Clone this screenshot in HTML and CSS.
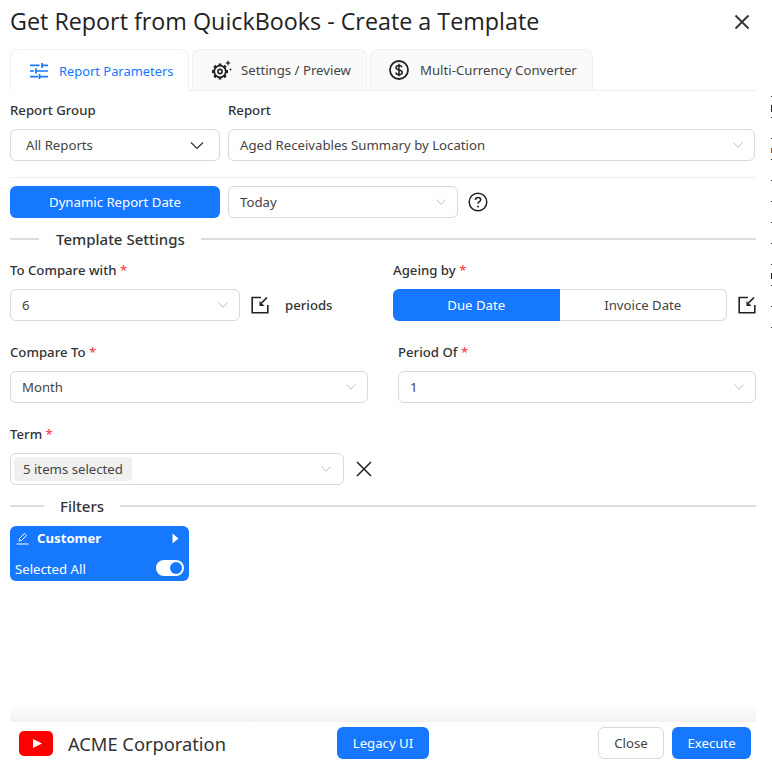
FILE: index.html
```html
<!DOCTYPE html>
<html lang="en">
<head>
    <meta charset="UTF-8">
    <meta name="viewport" content="width=device-width, initial-scale=1.0">
    <title>Get Report from QuickBooks - Create a Template</title>
    <link rel="stylesheet" href="styles.css">
</head>
<body>
<div class="dialog">
    <div class="dialog-head">
        <h1>Get Report from QuickBooks - Create a Template</h1>
        <svg class="close-x" width="16" height="16" viewBox="0 0 16 16"><path d="M1.500 1.500l13 13M14.500 1.500l-13 13" stroke="#333" stroke-width="1.800" fill="none"/></svg>
    </div>

    <div class="tabs">
        <div class="tab active">
            <svg width="18" height="16" viewBox="0 0 18 16" fill="none" stroke="#1677ff" stroke-width="1.700"><path d="M0 2.300h9.500M12 0v5M12 2.300h6M0 8h4M6 5.200v5.600M6 8h12M0 13.700h8M9.500 11v5M9.500 13.700h8.500"/></svg>
            <span>Report Parameters</span>
        </div>
        <div class="tab tab-settings">
            <svg width="22" height="22" viewBox="0 0 22 22" fill="none" stroke="#222"><circle cx="9" cy="12.500" r="2.100" stroke-width="1.600"/><circle cx="9" cy="12.500" r="5.800" stroke-width="1.800"/><path d="M9 4.500v2.200M9 18.300v2.200M1 12.500h2.200M14.800 12.500H17M3.300 6.800l1.600 1.600M13.100 16.600l1.600 1.600M14.700 6.800l-1.600 1.600M4.900 16.600l-1.600 1.600" stroke-width="2.800"/><path d="M17 1l.8 2.200 2.200.8-2.200.8-.8 2.200-.8-2.200-2.200-.8 2.200-.8z" fill="#222" stroke="none"/><path d="M19.500 9l.4 1.100 1.100.4-1.100.4-.4 1.100-.4-1.100-1.100-.4 1.100-.4z" fill="#222" stroke="none"/></svg>
            <span>Settings / Preview</span>
        </div>
        <div class="tab tab-currency">
            <svg width="20" height="20" viewBox="0 0 20 20" fill="none" stroke="#222"><circle cx="10" cy="10" r="9" stroke-width="1.800"/><path d="M13 7.200c-.4-1.200-1.500-1.800-3-1.800-1.700 0-3 .9-3 2.300 0 3 6.200 1.500 6.200 4.500 0 1.400-1.400 2.400-3.200 2.400-1.700 0-2.900-.8-3.200-2.100M10 3.800v12.400" stroke-width="1.500"/></svg>
            <span>Multi-Currency Converter</span>
        </div>
    </div>

    <div class="row-top">
        <div class="field">
            <label>Report Group</label>
            <div class="select">
                <span>All Reports</span>
                <svg class="chev-dark" width="14" height="9" viewBox="0 0 14 9"><path d="M1 1.500l6 6 6-6" fill="none" stroke="#333" stroke-width="1.200"/></svg>
            </div>
        </div>
        <div class="field">
            <label>Report</label>
            <div class="select">
                <span>Aged Receivables Summary by Location</span>
                <svg class="chev" width="10" height="6" viewBox="0 0 10 6"><path d="M.5.500L5 5.200 9.500.5"/></svg>
            </div>
        </div>
    </div>

    <hr class="thin">

    <div class="row-date">
        <button class="btn primary date-btn">Dynamic Report Date</button>
        <div class="select date-select">
            <span>Today</span>
            <svg class="chev" width="10" height="6" viewBox="0 0 10 6"><path d="M.5.500L5 5.200 9.500.5"/></svg>
        </div>
        <svg width="20" height="20" viewBox="0 0 20 20" fill="none" stroke="#222"><circle cx="10" cy="10" r="8.800" stroke-width="1.500"/><path d="M7.400 8c0-1.600 1.100-2.600 2.700-2.600 1.500 0 2.600 1 2.600 2.300 0 2-2.700 2-2.700 4.100" stroke-width="1.500"/><circle cx="10" cy="14.500" r="1" fill="#222" stroke="none"/></svg>
    </div>

    <div class="divider first"><span>Template Settings</span></div>

    <div class="row-compare">
        <div class="field compare-with">
            <label>To Compare with <em>*</em></label>
            <div class="inline">
                <div class="select compare-select">
                    <span>6</span>
                    <svg class="chev" width="10" height="6" viewBox="0 0 10 6"><path d="M.5.500L5 5.200 9.500.5"/></svg>
                </div>
                <svg class="pop" width="18" height="18" viewBox="0 0 18 18"><path d="M10 1.500H1.200v15.300h15.600V9" fill="none" stroke="#222" stroke-width="1.600"/><path d="M16 1.500l-5.500 5.500" stroke="#222" stroke-width="1.700"/><path d="M8.500 5v5h5z" fill="#222"/></svg>
                <strong class="periods">periods</strong>
            </div>
        </div>
        <div class="field ageing">
            <label>Ageing by <em>*</em></label>
            <div class="inline">
                <div class="segmented">
                    <div class="seg on">Due Date</div>
                    <div class="seg off">Invoice Date</div>
                </div>
                <svg class="pop" width="18" height="18" viewBox="0 0 18 18"><path d="M10 1.500H1.200v15.300h15.600V9" fill="none" stroke="#222" stroke-width="1.600"/><path d="M16 1.500l-5.500 5.500" stroke="#222" stroke-width="1.700"/><path d="M8.500 5v5h5z" fill="#222"/></svg>
            </div>
        </div>
    </div>

    <div class="row-period">
        <div class="field">
            <label>Compare To <em>*</em></label>
            <div class="select">
                <span>Month</span>
                <svg class="chev" width="10" height="6" viewBox="0 0 10 6"><path d="M.5.500L5 5.200 9.500.5"/></svg>
            </div>
        </div>
        <div class="field">
            <label>Period Of <em>*</em></label>
            <div class="select">
                <span>1</span>
                <svg class="chev" width="10" height="6" viewBox="0 0 10 6"><path d="M.5.500L5 5.200 9.500.5"/></svg>
            </div>
        </div>
    </div>

    <div class="field term">
        <label>Term <em>*</em></label>
        <div class="inline">
            <div class="select term-select">
                <span class="tag">5 items selected</span>
                <svg class="chev" width="10" height="6" viewBox="0 0 10 6"><path d="M.5.500L5 5.200 9.500.5"/></svg>
            </div>
            <svg class="clear-x" width="16" height="16" viewBox="0 0 16 16"><path d="M1 1l14 14M15 1L1 15" stroke="#222" stroke-width="1.500" fill="none"/></svg>
        </div>
    </div>

    <div class="divider filters"><span>Filters</span></div>

    <div class="filter-card">
        <div class="filter-top">
            <svg width="13" height="13" viewBox="0 0 13 13" fill="none" stroke="#fff" stroke-width="1"><path d="M3 9l.5-2.500L8.500 1.500l2 2-5 5zM.5 12h12"/></svg>
            <strong>Customer</strong>
            <svg class="caret" width="7" height="11" viewBox="0 0 7 11"><path d="M0.500 0.500l6 5-6 5z" fill="#fff"/></svg>
        </div>
        <div class="filter-bottom">
            <span>Selected All</span>
            <div class="switch"><i></i></div>
        </div>
    </div>
</div>

<div class="footer">
    <div class="brand">
        <svg width="34" height="25" viewBox="0 0 34 25"><rect width="34" height="25" rx="5" fill="#f00"/><path d="M14 8l9 4.500-9 4.500z" fill="#fff"/></svg>
        <span>ACME Corporation</span>
    </div>
    <button class="btn primary legacy">Legacy UI</button>
    <div class="actions">
        <button class="btn plain">Close</button>
        <button class="btn primary execute">Execute</button>
    </div>
</div>

<div class="edge-ticks">
    <i class="bar bar-one"></i>
    <i class="bar bar-two"></i>
    <i class="bar bar-three"></i>
</div>
</body>
</html>
```

FILE: styles.css
```css
* {
    box-sizing: border-box;
}
body {
    margin: 0;
    height: 764px;
    overflow: hidden;
    display: flex;
    flex-direction: column;
    background-color: #fff;
    color: #333;
    font-family: "Noto Sans", Arial, sans-serif;
    font-size: 13.2px;
    position: relative;
}
.dialog {
    flex: 1;
    padding: 0 16px 0 10px;
}
.dialog-head {
    height: 49px;
    display: flex;
    justify-content: space-between;
    align-items: flex-start;
    padding: 6px 6px 0 0;
}
h1 {
    margin: 0;
    font-family: "Open Sans", Arial, sans-serif;
    font-size: 23.3px;
    font-weight: 400;
    line-height: 31px;
    color: #222;
}
.close-x {
    margin-top: 8px;
}
.tabs {
    height: 42px;
    display: flex;
    gap: 3px;
    border-bottom: 1px solid #eee;
}
.tab {
    height: 41px;
    display: flex;
    align-items: center;
    padding-left: 18px;
    white-space: nowrap;
    background-color: #fafafa;
    border: 1px solid #f0f0f0;
    border-bottom: none;
    border-radius: 8px 8px 0 0;
    color: #444;
}
.tab.active {
    width: 179px;
    height: 42px;
    gap: 11px;
    padding-left: 19px;
    background-color: #fff;
    color: #1677ff;
    font-size: 12.9px;
}
.tab-settings {
    width: 175px;
    gap: 8px;
}
.tab-currency {
    width: 223px;
    gap: 11px;
}
label {
    display: block;
    height: 18px;
    line-height: 18px;
    margin-bottom: 10px;
    font-weight: 500;
    color: #333;
}
label em {
    font-style: normal;
    color: #ff3b3f;
}
.select {
    height: 32px;
    display: flex;
    align-items: center;
    justify-content: space-between;
    padding: 0 11px;
    border: 1px solid #d9d9d9;
    border-radius: 6px;
    background-color: #fff;
    color: #444;
}
.chev {
    fill: none;
    stroke: #bfbfbf;
    stroke-width: 1;
    flex: none;
}
.row-top {
    display: grid;
    grid-template-columns: 210px 527px;
    column-gap: 8px;
    padding-top: 10px;
}
.row-top .field:first-child .select {
    padding: 0 15px;
}
hr.thin {
    border: none;
    border-top: 1px solid #eee;
    margin: 16px 0 8px;
}
.row-date {
    display: flex;
    align-items: center;
    gap: 8px;
}
.btn {
    height: 32px;
    border: none;
    border-radius: 6px;
    font-family: inherit;
    font-size: 13.2px;
    padding: 0;
}
.primary {
    background-color: #1677ff;
    color: #fff;
}
.plain {
    width: 66px;
    background-color: #fff;
    border: 1px solid #d9d9d9;
    color: #444;
}
.legacy {
    width: 92px;
}
.execute {
    width: 79px;
}
.date-btn {
    width: 210px;
}
.date-select {
    width: 230px;
}
.row-date svg:last-child {
    margin-left: 2px;
}
.divider {
    display: flex;
    align-items: center;
    height: 20px;
    font-size: 15px;
    font-weight: 500;
    color: #333;
}
.divider::before {
    content: "";
    height: 2px;
    background-color: #ddd;
}
.divider::after {
    content: "";
    flex: 1;
    height: 2px;
    background-color: #ddd;
}
.divider.first {
    margin-top: 11px;
}
.divider.first::before {
    width: 29px;
}
.divider.first span {
    padding: 0 16px 0 17px;
}
.divider.filters {
    margin-top: 11px;
}
.divider.filters::before {
    width: 34px;
}
.divider.filters span {
    padding: 0 16px;
}
.row-compare {
    display: flex;
    margin-top: 12px;
}
.compare-with {
    width: 383px;
}
.ageing {
    flex: 1;
}
.inline {
    display: flex;
    align-items: center;
}
.compare-select {
    width: 230px;
}
.pop {
    flex: none;
    margin-left: 11px;
}
.periods {
    margin-left: 16px;
    font-weight: 500;
}
.segmented {
    width: 334px;
    height: 32px;
    display: flex;
}
.seg {
    flex: 1;
    display: flex;
    align-items: center;
    justify-content: center;
    color: #444;
}
.seg.on {
    background-color: #1677ff;
    border-radius: 6px 0 0 6px;
    color: #fff;
}
.seg.off {
    border: 1px solid #d9d9d9;
    border-left: none;
    border-radius: 0 6px 6px 0;
}
.row-period {
    display: grid;
    grid-template-columns: 358px 358px;
    column-gap: 30px;
    margin-top: 22px;
}
.term {
    margin-top: 22px;
}
.term-select {
    width: 334px;
    padding: 0 12px 0 3px;
}
.tag {
    height: 24px;
    line-height: 24px;
    padding: 0 9px;
    border-radius: 4px;
    background-color: #f0f0f0;
    color: #444;
}
.clear-x {
    margin-left: 12px;
}
.filter-card {
    width: 179px;
    height: 55px;
    margin-top: 10px;
    padding: 0 5px;
    background-color: #1677ff;
    border-radius: 6px;
    color: #fff;
}
.filter-top {
    height: 24px;
    display: flex;
    align-items: center;
    padding: 0 5px 0 1px;
    gap: 8px;
}
.filter-top .caret {
    margin-left: auto;
}
.filter-bottom {
    height: 31px;
    display: flex;
    align-items: center;
    justify-content: space-between;
    padding-top: 5px;
}
.filter-bottom span {
    padding-top: 2px;
}
.switch {
    width: 28px;
    height: 16px;
    padding: 2px;
    display: flex;
    justify-content: flex-end;
    border-radius: 8px;
    background-color: #fff;
}
.switch i {
    width: 12px;
    height: 12px;
    border-radius: 50%;
    background-color: #1677ff;
}
.footer {
    height: 42px;
    display: flex;
    align-items: flex-start;
    padding: 5px 21px 0 19px;
    position: relative;
}
.footer::before {
    content: "";
    position: absolute;
    left: 10px;
    right: 16px;
    top: -18px;
    height: 18px;
    background: linear-gradient(to bottom, rgba(0,0,0,0), rgba(0,0,0,0.05));
}
.brand {
    width: 318px;
    height: 32px;
    display: flex;
    align-items: center;
    gap: 15px;
    padding-top: 1px;
    font-size: 18.3px;
    color: #333;
}
.actions {
    margin-left: auto;
    display: flex;
    gap: 8px;
}
/* stray marks from the page behind the dialog */
.edge-ticks {
    position: absolute;
    top: 96px;
    right: 0;
    width: 1px;
    height: 232px;
    background: repeating-linear-gradient(to bottom, #222 0, #222 1px, transparent 1px, transparent 21px);
}
.bar {
    position: absolute;
    left: 0;
    width: 1px;
    background-color: #222;
}
.bar-one {
    top: 9px;
    height: 7px;
}
.bar-two {
    top: 52px;
    height: 5px;
    background-color: #a5532a;
}
.bar-three {
    top: 177px;
    height: 6px;
}
```
